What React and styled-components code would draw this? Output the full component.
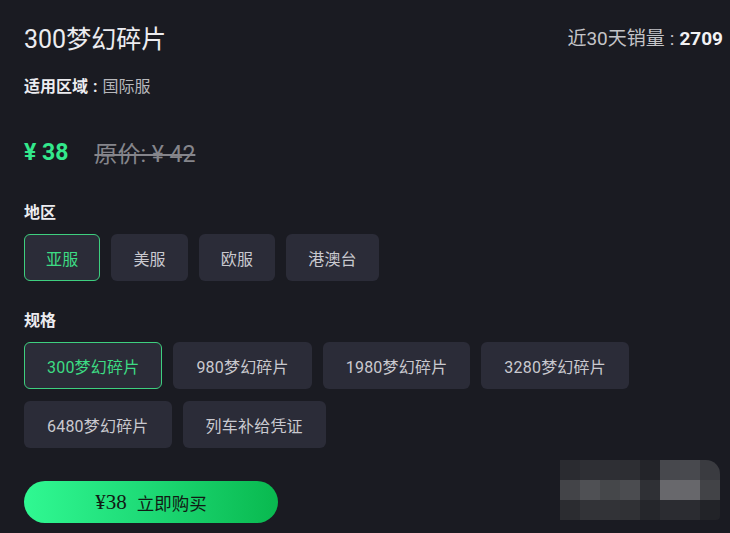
import React from 'react'
import styled, { createGlobalStyle, css } from 'styled-components'

const regions = ['亚服', '美服', '欧服', '港澳台']
const specs = ['300梦幻碎片', '980梦幻碎片', '1980梦幻碎片', '3280梦幻碎片', '6480梦幻碎片', '列车补给凭证']

const mosaic = [
    ['#2a2b30', '#2e2f34', '#2e2f34', '#2d2e33', '#232429', '#47484d', '#48494e', '#3a3b40'],
    ['#434448', '#4f5054', '#45474a', '#4b4c50', '#2f3035', '#68686c', '#67676b', '#424347'],
    ['#2b2c30', '#323337', '#323337', '#303135', '#25262b', '#2b2c31', '#2b2c31', '#222328'],
]

const App = () => {
    return (
        <>
            <GlobalStyle />
            <Page>
                <Header>
                    <Title>300梦幻碎片</Title>
                    <Sales>
                        近30天销量<Colon>:</Colon><strong>2709</strong>
                    </Sales>
                </Header>
                <Info>
                    <strong>适用区域<Colon>:</Colon></strong>国际服
                </Info>
                <PriceRow>
                    <Price>¥ 38</Price>
                    <OldPrice>原价: ¥ 42</OldPrice>
                </PriceRow>

                <Label>地区</Label>
                <Options>
                    {regions.map((r, i) => (
                        <Option key={r} $active={i === 0} $pad={21}>{r}</Option>
                    ))}
                </Options>

                <Label $top={29}>规格</Label>
                <Options>
                    {specs.map((s, i) => (
                        <Option key={s} $active={i === 0}>{s}</Option>
                    ))}
                </Options>

                <BuyButton>
                    <BuyPrice>¥38</BuyPrice>立即购买
                </BuyButton>

                <Mosaic>
                    {mosaic.flat().map((c, i) => (
                        <Cell key={i} style={{ background: c }} />
                    ))}
                </Mosaic>
            </Page>
        </>
    )
}

const GlobalStyle = createGlobalStyle`
    html, body {
        margin: 0;
        padding: 0;
        background: #1a1b22;
    }
    body {
        font-family: Roboto, "Noto Sans CJK SC", sans-serif;
        color: #e6e6ea;
    }
`

const Page = styled.div`
    position: relative;
    width: 730px;
    height: 533px;
    box-sizing: border-box;
    padding: 24px 7px 0 24px;
    background: #1a1b22;
    overflow: hidden;
`

const Header = styled.div`
    display: flex;
    justify-content: space-between;
    align-items: center;
    height: 32px;
`

const Title = styled.h1`
    margin: 0;
    font-size: 25px;
    font-weight: 400;
    line-height: 32px;
    color: #ececf0;
`

const Colon = styled.span`
    display: inline-block;
    padding: 0 5px;
`

const Sales = styled.div`
    font-size: 19px;
    line-height: 30px;
    color: #c4c4c8;
    margin-top: -2px;

    strong {
        color: #f2f2f4;
        font-weight: 700;
    }
`

const Info = styled.div`
    margin-top: 20px;
    font-size: 16px;
    line-height: 22px;
    color: #b8b8bc;

    strong {
        color: #ececf0;
        font-weight: 700;
    }
`

const PriceRow = styled.div`
    display: flex;
    align-items: center;
    gap: 26px;
    margin-top: 39px;
    height: 30px;
`

const Price = styled.span`
    font-size: 23px;
    font-weight: 700;
    color: #33e98c;
`

const OldPrice = styled.span`
    font-size: 23px;
    color: #85858b;
    text-decoration: line-through;
    text-decoration-thickness: 2px;
`

const Label = styled.div`
    margin-top: ${p => p.$top ?? 35}px;
    font-size: 16px;
    font-weight: 700;
    line-height: 22px;
    color: #ececf0;
`

const Options = styled.div`
    display: flex;
    flex-wrap: wrap;
    gap: 12px 11px;
    margin-top: 10px;
    max-width: 620px;
`

const Option = styled.div`
    box-sizing: border-box;
    height: 47px;
    padding: 0 ${p => p.$pad ?? 22}px;
    display: flex;
    align-items: center;
    justify-content: center;
    border-radius: 6px;
    background: #2b2c38;
    border: 1px solid transparent;
    font-size: 16px;
    letter-spacing: 0.2px;
    color: #c9c9cf;

    ${p => p.$active && css`
        border-color: #3ecf7f;
        color: #3ddc84;
    `}
`

const BuyButton = styled.div`
    margin-top: 33px;
    width: 254px;
    height: 42px;
    border-radius: 21px;
    background: linear-gradient(90deg, #30f892 0%, #1fdc78 45%, #09b94f 100%);
    display: flex;
    align-items: center;
    justify-content: center;
    font-family: "Liberation Serif", "Noto Sans CJK SC", serif;
    font-size: 17.5px;
    color: #111a14;
`

const BuyPrice = styled.span`
    margin-right: 10px;
    font-size: 21px;
`

const Mosaic = styled.div`
    position: absolute;
    left: 560px;
    top: 460px;
    display: grid;
    grid-template-columns: repeat(8, 20px);
    grid-template-rows: repeat(3, 20px);
    border-top-right-radius: 14px;
    border-bottom-right-radius: 4px;
    overflow: hidden;
`

const Cell = styled.div``

export default App
